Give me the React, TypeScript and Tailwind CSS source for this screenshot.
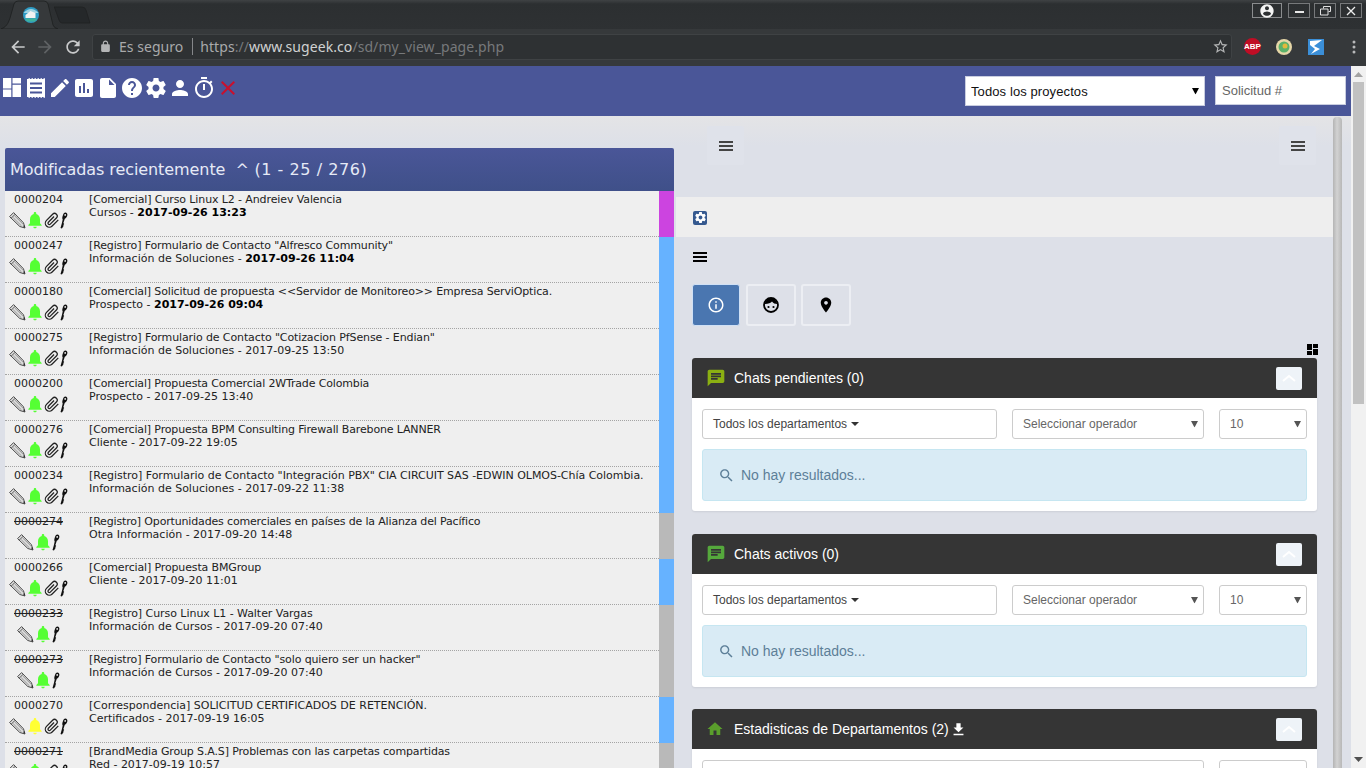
import React from "react";

const P = {
  create: "M3 17.25V21h3.75L17.81 9.94l-3.75-3.75L3 17.25zM20.71 7.04c.39-.39.39-1.02 0-1.41l-2.34-2.34c-.39-.39-1.02-.39-1.41 0l-1.83 1.83 3.75 3.75 1.83-1.83z",
  chart: "M19 3H5c-1.1 0-2 .9-2 2v14c0 1.1.9 2 2 2h14c1.1 0 2-.9 2-2V5c0-1.1-.9-2-2-2zM9 17H7v-7h2v7zm4 0h-2V7h2v10zm4 0h-2v-4h2v4z",
  file: "M6 2c-1.1 0-1.99.9-1.99 2L4 20c0 1.1.89 2 1.99 2H18c1.1 0 2-.9 2-2V8l-6-6H6zm7 7V3.5L18.5 9H13z",
  help: "M12 2C6.48 2 2 6.48 2 12s4.48 10 10 10 10-4.48 10-10S17.52 2 12 2zm1 17h-2v-2h2v2zm2.07-7.75l-.9.92C13.45 12.9 13 13.5 13 15h-2v-.5c0-1.1.45-2.1 1.17-2.83l1.24-1.26c.37-.36.59-.86.59-1.41 0-1.1-.9-2-2-2s-2 .9-2 2H8c0-2.21 1.79-4 4-4s4 1.79 4 4c0 .88-.36 1.68-.93 2.25z",
  gear: "M19.43 12.98c.04-.32.07-.64.07-.98s-.03-.66-.07-.98l2.11-1.65c.19-.15.24-.42.12-.64l-2-3.46c-.12-.22-.39-.3-.61-.22l-2.49 1c-.52-.4-1.08-.73-1.69-.98l-.38-2.65C14.46 2.18 14.25 2 14 2h-4c-.25 0-.46.18-.49.42l-.38 2.65c-.61.25-1.17.59-1.69.98l-2.49-1c-.23-.09-.49 0-.61.22l-2 3.46c-.13.22-.07.49.12.64l2.11 1.65c-.04.32-.07.65-.07.98s.03.66.07.98l-2.11 1.65c-.19.15-.24.42-.12.64l2 3.46c.12.22.39.3.61.22l2.49-1c.52.4 1.08.73 1.69.98l.38 2.65c.03.24.24.42.49.42h4c.25 0 .46-.18.49-.42l.38-2.65c.61-.25 1.17-.59 1.69-.98l2.49 1c.23.09.49 0 .61-.22l2-3.46c.12-.22.07-.49-.12-.64l-2.11-1.65zM12 15.5c-1.93 0-3.5-1.57-3.5-3.5s1.57-3.5 3.5-3.5 3.5 1.57 3.5 3.5-1.57 3.5-3.5 3.5z",
  person: "M12 12c2.21 0 4-1.79 4-4s-1.79-4-4-4-4 1.79-4 4 1.79 4 4 4zm0 2c-2.67 0-8 1.34-8 4v2h16v-2c0-2.66-5.33-4-8-4z",
  timer: "M15 1H9v2h6V1zm-4 13h2V8h-2v6zm8.03-6.61l1.42-1.42c-.43-.51-.9-.99-1.41-1.41l-1.42 1.42C16.07 4.74 14.12 4 12 4c-4.97 0-9 4.03-9 9s4.02 9 9 9 9-4.03 9-9c0-2.12-.74-4.07-1.97-5.61zM12 20c-3.87 0-7-3.13-7-7s3.13-7 7-7 7 3.13 7 7-3.13 7-7 7z",
  close: "M19 6.41L17.59 5 12 10.59 6.41 5 5 6.41 10.59 12 5 17.59 6.41 19 12 13.41 17.59 19 19 17.59 13.41 12z",
  bell: "M12 22c1.1 0 2-.9 2-2h-4c0 1.1.89 2 2 2zm6-6v-5c0-3.07-1.64-5.64-4.5-6.32V4c0-.83-.67-1.5-1.5-1.5s-1.5.67-1.5 1.5v.68C7.63 5.36 6 7.92 6 11v5l-2 2v1h16v-1l-2-2z",
  chat: "M20 2H4c-1.1 0-1.99.9-1.99 2L2 22l4-4h14c1.1 0 2-.9 2-2V4c0-1.1-.9-2-2-2zM6 9h12v2H6V9zm8 5H6v-2h8v2zm4-6H6V6h12v2z",
  home: "M10 20v-6h4v6h5v-8h3L12 3 2 12h3v8z",
  search: "M15.5 14h-.79l-.28-.27C15.41 12.59 16 11.11 16 9.5 16 5.91 13.09 3 9.5 3S3 5.91 3 9.5 5.91 16 9.5 16c1.61 0 3.09-.59 4.23-1.57l.27.28v.79l5 4.99L20.49 19l-4.99-5zm-6 0C7.01 14 5 11.99 5 9.5S7.01 5 9.5 5 14 7.01 14 9.5 11.99 14 9.5 14z",
  info: "M11 7h2v2h-2zm0 4h2v6h-2zm1-9C6.48 2 2 6.48 2 12s4.48 10 10 10 10-4.48 10-10S17.52 2 12 2zm0 18c-4.41 0-8-3.59-8-8s3.59-8 8-8 8 3.59 8 8-3.59 8-8 8z",
  pin: "M12 2C8.13 2 5 5.13 5 9c0 5.25 7 13 7 13s7-7.75 7-13c0-3.87-3.13-7-7-7zm0 9.5c-1.38 0-2.5-1.12-2.5-2.5s1.12-2.5 2.5-2.5 2.5 1.12 2.5 2.5-1.12 2.5-2.5 2.5z",
  back: "M20 11H7.83l5.59-5.59L12 4l-8 8 8 8 1.41-1.41L7.83 13H20v-2z",
  forward: "M12 4l-1.41 1.41L16.17 11H4v2h12.17l-5.58 5.59L12 20l8-8z",
  reload: "M17.65 6.35C16.2 4.9 14.21 4 12 4c-4.42 0-7.99 3.58-7.99 8s3.57 8 7.99 8c3.73 0 6.84-2.55 7.73-6h-2.08c-.82 2.33-3.04 4-5.65 4-3.31 0-6-2.69-6-6s2.69-6 6-6c1.66 0 3.14.69 4.22 1.78L13 11h7V4l-2.35 2.35z",
  lock: "M18 8h-1V6c0-2.76-2.24-5-5-5S7 3.24 7 6v2H6c-1.1 0-2 .9-2 2v10c0 1.1.9 2 2 2h12c1.1 0 2-.9 2-2V10c0-1.1-.9-2-2-2zM9 6c0-1.66 1.34-3 3-3s3 1.34 3 3v2H9V6z",
  star: "M22 9.24l-7.19-.62L12 2 9.19 8.63 2 9.24l5.46 4.73L5.82 21 12 17.27 18.18 21l-1.63-7.03L22 9.24zM12 15.4l-3.76 2.27 1-4.28-3.32-2.88 4.38-.38L12 6.1l1.71 4.04 4.38.38-3.32 2.88 1 4.28L12 15.4z",
  account: "M12 2C6.48 2 2 6.48 2 12s4.48 10 10 10 10-4.48 10-10S17.52 2 12 2zm0 3c1.66 0 3 1.34 3 3s-1.34 3-3 3-3-1.34-3-3 1.34-3 3-3zm0 14.2c-2.5 0-4.71-1.28-6-3.22.03-1.99 4-3.08 6-3.08 1.99 0 5.97 1.09 6 3.08-1.29 1.94-3.5 3.22-6 3.22z",
  download: "M19 9h-4V3H9v6H5l7 7 7-7zM5 18v2h14v-2H5z",
};

const I = ({ d, size = 24, color = "#fff", cls = "" }: { d: string; size?: number; color?: string; cls?: string }) => (
  <svg width={size} height={size} viewBox="0 0 24 24" fill={color} className={`shrink-0 ${cls}`}>
    <path d={d} />
  </svg>
);

const Burger = ({ color, cls = "" }: { color: string; cls?: string }) => (
  <svg width="14" height="10" viewBox="0 0 14 10" className={cls}>
    <rect y="0" width="14" height="2" fill={color} />
    <rect y="4" width="14" height="2" fill={color} />
    <rect y="8" width="14" height="2" fill={color} />
  </svg>
);

const Quilt = () => (
  <svg width="24" height="24" viewBox="0 0 24 24" className="shrink-0">
    <path fill="#fff" d="M3 2h8.300v10.500H3zM3 13.500h8.300V21H3zM12.500 2H21v5.500h-8.500zM12.500 8.700H21V21h-8.500z" />
  </svg>
);

const ListIcon = () => (
  <svg width="24" height="24" viewBox="0 0 24 24" className="shrink-0">
    <path fill="#fff" d="M3 3h1.500v-.8H6V3h1.500v-.8H9V3h1.500v-.8H12V3h1.500v-.8H15V3h1.500v-.8H18V3h1.500v-.8H21V21.800h-1.500V21H18v.8h-1.500V21H15v.8h-1.500V21H12v.8h-1.500V21H9v.8H7.500V21H6v.8H4.500V21H3z" />
    <rect x="6" y="6.500" width="12" height="2" fill="#4a5698" />
    <rect x="6" y="11" width="12" height="2" fill="#4a5698" />
    <rect x="6" y="15.500" width="12" height="2" fill="#4a5698" />
  </svg>
);

const Pencil = () => (
  <svg width="17" height="17" viewBox="0 0 17 17" className="shrink-0">
    <path d="M.6 4.600L4.600.6 14.500 10.800 16 16 10.800 14.500z" fill="#dcdcdc" stroke="#4a4a4a" strokeWidth="1" strokeLinejoin="round" />
    <path d="M2.200 6.200L6.200 2.200" stroke="#4a4a4a" strokeWidth=".9" fill="none" />
    <path d="M4.200 5.700L12.400 13.800M5.800 4L13.900 12" stroke="#888" strokeWidth=".8" fill="none" />
    <path d="M14 14l2 2-.6-2.800z" fill="#222" />
  </svg>
);

const Clip = () => (
  <svg width="16" height="17" viewBox="0 0 24 24" fill="none" stroke="#222" strokeWidth="1.900" className="shrink-0">
    <path d="M21.440 11.050l-9.190 9.190a6 6 0 0 1-8.490-8.490l9.190-9.190a4 4 0 0 1 5.660 5.660l-9.200 9.190a2 2 0 0 1-2.830-2.830l8.490-8.480" />
  </svg>
);

const Key = () => (
  <svg width="8" height="17" viewBox="0 0 8 17" className="shrink-0">
    <path d="M5.300.6c1.600 0 2.400 1.400 2 3-.4 1.500-1.300 2.700-2.500 3.100L3.400 11l.8 1-.9 1 .3 1-1.700 2.600-1.400-.6 1.300-4.500.9-3.900C1.900 6.200 2.400 4.500 3 3 3.400 1.600 4.200.6 5.300.6z" fill="#111" />
    <circle cx="5.200" cy="2.900" r=".9" fill="#efefef" />
  </svg>
);

type RowT = { id: string; title: string; sub: string; date: string; color: string; track: string; bold?: boolean; strike?: boolean; noClip?: boolean; yellow?: boolean };

const BLUE = "bg-[#66b2ff]";
const GREY = "bg-[#b9b9b9]";
const T = "tracking-[-0.13px]";

const rows: RowT[] = [
  { id: "0000204", title: "[Comercial] Curso Linux L2 - Andreiev Valencia", sub: "Cursos", date: "2017-09-26 13:23", color: "bg-[#cc44e0]", track: "tracking-[-0.11px]", bold: true },
  { id: "0000247", title: '[Registro] Formulario de Contacto "Alfresco Community"', sub: "Información de Soluciones", date: "2017-09-26 11:04", color: BLUE, track: T, bold: true },
  { id: "0000180", title: "[Comercial] Solicitud de propuesta <<Servidor de Monitoreo>> Empresa ServiOptica.", sub: "Prospecto", date: "2017-09-26 09:04", color: BLUE, track: "tracking-[-0.15px]", bold: true },
  { id: "0000275", title: '[Registro] Formulario de Contacto "Cotizacion PfSense - Endian"', sub: "Información de Soluciones", date: "2017-09-25 13:50", color: BLUE, track: "tracking-[-0.11px]" },
  { id: "0000200", title: "[Comercial] Propuesta Comercial 2WTrade Colombia", sub: "Prospecto", date: "2017-09-25 13:40", color: BLUE, track: "tracking-[-0.15px]" },
  { id: "0000276", title: "[Comercial] Propuesta BPM Consulting Firewall Barebone LANNER", sub: "Cliente", date: "2017-09-22 19:05", color: BLUE, track: "tracking-[-0.15px]" },
  { id: "0000234", title: '[Registro] Formulario de Contacto "Integración PBX" CIA CIRCUIT SAS -EDWIN OLMOS-Chía Colombia.', sub: "Información de Soluciones", date: "2017-09-22 11:38", color: BLUE, track: "tracking-[-0.03px]" },
  { id: "0000274", title: "[Registro] Oportunidades comerciales en países de la Alianza del Pacífico", sub: "Otra Información", date: "2017-09-20 14:48", color: GREY, track: "tracking-[-0.16px]", strike: true, noClip: true },
  { id: "0000266", title: "[Comercial] Propuesta BMGroup", sub: "Cliente", date: "2017-09-20 11:01", color: BLUE, track: "tracking-[-0.14px]" },
  { id: "0000233", title: "[Registro] Curso Linux L1 - Walter Vargas", sub: "Información de Cursos", date: "2017-09-20 07:40", color: GREY, track: "tracking-[-0.05px]", strike: true, noClip: true },
  { id: "0000273", title: '[Registro] Formulario de Contacto "solo quiero ser un hacker"', sub: "Información de Cursos", date: "2017-09-20 07:40", color: GREY, track: "tracking-[-0.12px]", strike: true, noClip: true },
  { id: "0000270", title: "[Correspondencia] SOLICITUD CERTIFICADOS DE RETENCIÓN.", sub: "Certificados", date: "2017-09-19 16:05", color: BLUE, track: "tracking-normal", yellow: true },
  { id: "0000271", title: "[BrandMedia Group S.A.S] Problemas con las carpetas compartidas", sub: "Red", date: "2017-09-19 10:57", color: GREY, track: "tracking-[-0.14px]", strike: true },
];

const Row = ({ r }: { r: RowT }) => (
  <div className="flex h-[46px] shrink-0">
    <div className="flex flex-1 min-w-0 border-b border-dotted border-[#a4a4a4] bg-[#efefef] pt-[2px] text-[11px] leading-[13px] text-[#222]">
      <div className="w-[67px] shrink-0">
        <div className={`text-center ${r.strike ? "line-through" : ""}`}>{r.id}</div>
        <div className="mt-[4px] flex items-center justify-center pr-[1px]">
          <Pencil />
          <I d={P.bell} size={20} color={r.yellow ? "#ffff33" : "#55ff33"} cls="mx-[-1px]" />
          {!r.noClip && <Clip />}
          <Key />
        </div>
      </div>
      <div className="ml-[17px] whitespace-nowrap">
        <div className={r.track}>{r.title}</div>
        <div>
          {r.sub} - {r.bold ? <b className="text-black">{r.date}</b> : r.date}
        </div>
      </div>
    </div>
    <div className={`w-[15px] shrink-0 ${r.color}`} />
  </div>
);

const Arrow = ({ color, cls }: { color: string; cls: string }) => (
  <svg width="7" height="7" viewBox="0 0 7 7" className={`pointer-events-none absolute top-1/2 -translate-y-1/2 ${cls}`}>
    <path d="M0 .5h7L3.500 7z" fill={color} />
  </svg>
);

const Select = ({ label, cls }: { label: string; cls: string }) => (
  <div className={`relative h-[30px] ${cls}`}>
    <select className="h-full w-full appearance-none rounded-[3px] border border-[#ccc] bg-white pl-[10px] text-[12px] text-[#666]" defaultValue={label}>
      <option>{label}</option>
    </select>
    <Arrow color="#555" cls="right-[6px]" />
  </div>
);

const Panel = ({ icon, iconColor, title, extra, body = true, iconSize = 20, cls = "" }: { icon: string; iconColor: string; title: string; extra?: React.ReactNode; body?: boolean; iconSize?: number; cls?: string }) => (
  <section className={`rounded-[3px] bg-white shadow-[0_1px_2px_rgba(0,0,0,0.08)] ${cls}`}>
    <header className="flex h-[40px] items-center rounded-t-[3px] bg-[#353535] pl-[14px] pr-[15px] text-[14px] text-white">
      <div className="flex w-[28px] items-center">
        <I d={icon} size={iconSize} color={iconColor} />
      </div>
      <span>{title}</span>
      {extra}
      <button className="ml-auto flex h-[23px] w-[26px] items-center justify-center rounded-[2px] bg-[#eef3f8]">
        <svg width="14" height="8" viewBox="0 0 14 8" fill="none" stroke="#fff" strokeWidth="2">
          <path d="M1 7l6-5 6 5" />
        </svg>
      </button>
    </header>
    <div className="px-[10px] pb-[10px] pt-[11px]">
      <div className="flex">
        {body ? (
          <div className="flex h-[30px] w-[295px] items-center rounded-[3px] border border-[#ccc] bg-white pl-[10px] text-[12px] text-[#444]">
            Todos los departamentos
            <svg width="8" height="4" viewBox="0 0 8 4" className="ml-[4px]"><path d="M0 0h8L4 4z" fill="#333" /></svg>
          </div>
        ) : null}
        <Select label="Seleccionar operador" cls={body ? "ml-[15px] w-[192px]" : "w-[502px]"} />
        <Select label="10" cls="ml-[15px] w-[88px]" />
      </div>
      {body && (
        <div className="mt-[10px] flex h-[52px] items-center rounded-[3px] border border-[#c6e6f1] bg-[#d9ebf5] pl-[15px] text-[14px] text-[#5d7f98]">
          <I d={P.search} size={17} color="#5d7f98" />
          <span className="ml-[6px]">No hay resultados...</span>
        </div>
      )}
    </div>
  </section>
);

export default function App() {
  return (
    <div className="flex h-[768px] w-[1366px] flex-col overflow-hidden font-['Liberation_Sans',sans-serif]">
      {/* Title bar */}
      <div className="flex h-[29px] shrink-0 items-start bg-[linear-gradient(#3f4244,#2c2f31_4px,#2e3133)]">
        <svg width="100" height="29" viewBox="0 0 100 29" className="shrink-0">
          <path d="M1 29C6 27 8 24 10 18L14 4Q15 1 18 1H44Q47 1 48 4L53 25Q54 28 58 29z" fill="#36393b" stroke="#1d1f20" strokeWidth=".8" />
          <path d="M54 7H82Q85 7 86 10L90 23H62Q60 23 59 20L55 9Q54.500 7 54 7z" fill="#25282a" stroke="#1f2122" strokeWidth=".8" />
          <circle cx="31" cy="15" r="8" fill="#2e9bc4" />
          <path d="M23.500 13Q31 5 38.500 13z" fill="#9fd3e2" />
          <path d="M25.500 15l5-4 5 2v5h-10z" fill="#f2f2f2" />
          <path d="M25 18.500h12l-2 3h-8z" fill="#3fb39b" />
        </svg>
        <div className="ml-auto mr-[4px] flex items-start pt-[3px]">
          <div className="flex h-[15px] w-[30px] items-center justify-center border border-[#8a8c8e]">
            <I d={P.account} size={16} color="#f4f4f4" />
          </div>
          <div className="ml-[6px] flex h-[15px] w-[22px] items-center justify-center border border-[#77797b]">
            <span className="mt-[3px] h-[2px] w-[9px] bg-[#e8e8e8]" />
          </div>
          <div className="ml-[4px] flex h-[15px] w-[22px] items-center justify-center border border-[#77797b]">
            <svg width="11" height="10" viewBox="0 0 11 10" fill="none" stroke="#e0e0e0">
              <path d="M3.500 2.500V.5h7v5h-2M.5 3h7.500v6H.5z" />
            </svg>
          </div>
          <div className="ml-[4px] flex h-[15px] w-[22px] items-center justify-center border border-[#77797b]">
            <svg width="10" height="10" viewBox="0 0 10 10" stroke="#eee" strokeWidth="1.300"><path d="M1 1l8 8M9 1l-8 8" /></svg>
          </div>
        </div>
      </div>
      {/* Browser toolbar */}
      <div className="flex h-[37px] shrink-0 items-center bg-[#36393b] pb-[2px] pl-[8px] pr-[7px] font-['Noto_Sans',sans-serif]">
        <I d={P.back} size={20} color="#c9cacb" />
        <I d={P.forward} size={20} color="#5f6264" cls="ml-[7px]" />
        <I d={P.reload} size={20} color="#c9cacb" cls="ml-[8px]" />
        <div className="ml-[9px] flex h-[26px] w-[1140px] items-center rounded-[3px] border border-[#3f4244] bg-[#2e3133] pl-[6px] pr-[2px] text-[14px]">
          <I d={P.lock} size={13} color="#b4b5b6" />
          <span className="ml-[7px] tracking-[0.03px] text-[#a9aaab]">Es seguro</span>
          <span className="ml-[9px] h-[17px] w-px bg-[#85878a]" />
          <span className="ml-[7px] whitespace-nowrap tracking-[0.07px] text-[#a9aaab]">
            https<span className="text-[#77797b]">://</span><span className="text-[#d0d1d2]">www.sugeek.co</span><span className="text-[#77797b]">/sd/my_view_page.php</span>
          </span>
          <I d={P.star} size={17} color="#b4b5b6" cls="ml-auto" />
        </div>
        <div className="ml-[12px] flex h-[17px] w-[17px] items-center justify-center rounded-full bg-[#c00d25] text-[8px] font-bold leading-none text-white font-['Liberation_Sans',sans-serif]">ABP</div>
        <svg width="16" height="16" viewBox="0 0 16 16" className="ml-[15px]">
          <circle cx="8" cy="8" r="8" fill="#e6d7a8" />
          <circle cx="8" cy="8" r="5.500" fill="#5cb26a" />
          <circle cx="9" cy="7" r="2.500" fill="#e2b93c" />
        </svg>
        <svg width="16" height="16" viewBox="0 0 16 16" className="ml-[16px]">
          <rect width="16" height="16" fill="#3b8fd8" />
          <path d="M2 2L14 1 6 7l6 3-9 5 4-5-5-4z" fill="#fff" />
        </svg>
        <svg width="4" height="14" viewBox="0 0 4 14" className="ml-[28px]">
          <circle cx="2" cy="2" r="1.500" fill="#b8b9ba" /><circle cx="2" cy="7" r="1.500" fill="#b8b9ba" /><circle cx="2" cy="12" r="1.500" fill="#b8b9ba" />
        </svg>
      </div>

      <div className="flex min-h-0 flex-1">
        <div className="flex min-w-0 flex-1 flex-col">
          {/* App nav */}
          <nav className="flex h-[50px] shrink-0 items-start bg-[#4a5698] pt-[10px]">
            <Quilt />
            <ListIcon />
            <I d={P.create} />
            <I d={P.chart} />
            <I d={P.file} />
            <I d={P.help} />
            <I d={P.gear} />
            <I d={P.person} />
            <I d={P.timer} />
            <I d={P.close} color="#c8102e" />
            <div className="relative ml-auto h-[30px] w-[240px]">
              <select className="h-full w-full appearance-none border border-[#c9cde0] bg-white pl-[5px] pt-[1px] text-[13px] tracking-[0.1px] text-[#111]" defaultValue="t">
                <option value="t">Todos los proyectos</option>
              </select>
              <Arrow color="#000" cls="right-[6px]" />
            </div>
            <input placeholder="Solicitud #" className="ml-[10px] mr-[5px] h-[29px] w-[131px] border border-[#c9cde0] bg-white pl-[6px] text-[13px] placeholder:text-[#666]" />
          </nav>

          {/* Main */}
          <div className="flex min-h-0 flex-1 bg-[linear-gradient(#e4e4e6,#dde0e8_30px)]">
            {/* Left column */}
            <div className="ml-[5px] mt-[32px] flex w-[669px] shrink-0 flex-col font-['DejaVu_Sans',sans-serif]">
              <div className="flex h-[43px] shrink-0 items-center whitespace-pre rounded-t-[2px] bg-[linear-gradient(#4a5698,#3f5089)] pl-[5px] pt-[1px] text-[16px] text-[#e6eaf6]">
                <span className="tracking-[-0.08px]">Modificadas recientemente</span>
                <span className="ml-[10px]">^</span>
                <span className="tracking-[0.55px]"> (1 - 25 / 276)</span>
              </div>
              {rows.map((r) => (
                <Row key={r.id} r={r} />
              ))}
            </div>

            {/* Right column */}
            <div className="ml-[2px] w-[657px] shrink-0">
              <div className="flex h-[81px] items-start justify-between pl-[31px] pr-[17px] pt-[10px]">
                <div className="flex h-[39px] w-[37px] items-center justify-center rounded-[2px] bg-[#dfe2ea]">
                  <Burger color="#444" />
                </div>
                <div className="flex h-[39px] w-[37px] items-center justify-center rounded-[2px] bg-[#dfe2ea]">
                  <Burger color="#444" />
                </div>
              </div>
              <div className="flex h-[40px] items-center bg-[#eeeeee] pl-[17px]">
                <span className="mt-[1px] flex h-[14px] w-[14px] items-center justify-center rounded-[2px] bg-[#35598f]">
                  <I d={P.gear} size={13} />
                </span>
              </div>
              <div className="pl-[16px] pr-[16px]">
                <Burger color="#000" cls="ml-[1px] mt-[15px] block" />
                <div className="mt-[22px] flex">
                  <button className="flex h-[42px] w-[48px] items-center justify-center rounded-[3px] border border-[#cfe0f5] bg-[#4a76b0]">
                    <I d={P.info} size={18} />
                  </button>
                  <button className="ml-[6px] flex h-[42px] w-[50px] items-center justify-center rounded-[3px] border-2 border-[#eceef3]">
                    <svg width="16" height="16" viewBox="0 0 16 16">
                      <circle cx="8" cy="8" r="7" fill="none" stroke="#000" strokeWidth="1.800" />
                      <path d="M1.500 7C3 2.500 6 1 8 1s5 1.500 6.500 6c-2.500 0-4.500-.8-5.500-2.500C8 6 4.500 7.200 1.500 7z" fill="#000" />
                      <circle cx="5.500" cy="10" r="1.100" fill="#000" />
                      <circle cx="10.500" cy="10" r="1.100" fill="#000" />
                    </svg>
                  </button>
                  <button className="ml-[5px] flex h-[42px] w-[50px] items-center justify-center rounded-[3px] border-2 border-[#eceef3]">
                    <I d={P.pin} size={18} color="#000" />
                  </button>
                </div>
                <div className="mt-[18px] flex h-[14px] items-start justify-end">
                  <svg width="11" height="11" viewBox="0 0 11 11" className="mr-[-1px]">
                    <path d="M0 0h5v6H0zM6 0h5v4H6zM0 7h5v4H0zM6 5h5v6H6z" fill="#000" />
                  </svg>
                </div>
                <div className="flex flex-col gap-[22px]">
                  <Panel icon={P.chat} iconColor="#8bb012" title="Chats pendientes (0)" cls="mb-[1px]" />
                  <Panel icon={P.chat} iconColor="#55a83c" title="Chats activos (0)" />
                  <Panel
                    icon={P.home}
                    iconColor="#5a9e2c"
                    iconSize={18}
                    title="Estadisticas de Departamentos (2)"
                    body={false}
                    extra={<I d={P.download} size={17} cls="ml-[1px]" />}
                  />
                </div>
              </div>
            </div>

            {/* Inner scrollbar */}
            <div className="mt-[1px] w-[9px] shrink-0 rounded-t-[4px] bg-[linear-gradient(90deg,#b4b4b4,#d2d2d2_45%,#b8b8b8)]" />
          </div>
        </div>

        {/* Page scrollbar */}
        <div className="flex w-[15px] shrink-0 flex-col items-center bg-[#f1f1f1]">
          <svg width="9" height="5" viewBox="0 0 9 5" className="mt-[6px]"><path d="M0 5h9L4.500 0z" fill="#a3a3a3" /></svg>
          <div className="mt-[5px] h-[322px] w-[11px] bg-[#c1c1c1]" />
          <svg width="9" height="5" viewBox="0 0 9 5" className="mb-[6px] mt-auto"><path d="M0 0h9L4.500 5z" fill="#505050" /></svg>
        </div>
      </div>
    </div>
  );
}
